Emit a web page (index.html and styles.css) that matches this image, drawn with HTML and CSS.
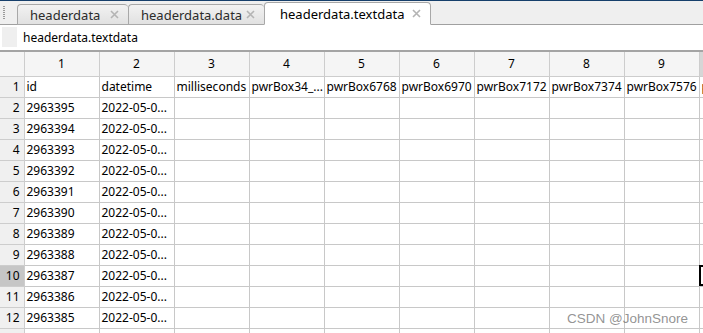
FILE: index.html
```html
<!DOCTYPE html>
<html lang="en">
<head>
    <meta charset="UTF-8">
    <title>headerdata.textdata</title>
    <link rel="stylesheet" href="styles.css">
</head>
<body>
    <div class="window">
        <div class="tabbar">
            <div class="grip"></div>
            <div class="tab">
                <span class="tab-name">headerdata</span>
                <svg class="close" width="9" height="9" viewBox="0 0 9 9"><path d="M1 1L8 8M8 1L1 8" /></svg>
            </div>
            <div class="tab">
                <span class="tab-name">headerdata.data</span>
                <svg class="close" width="9" height="9" viewBox="0 0 9 9"><path d="M1 1L8 8M8 1L1 8" /></svg>
            </div>
            <div class="tab active">
                <span class="tab-name">headerdata.textdata</span>
                <svg class="close" width="9" height="9" viewBox="0 0 9 9"><path d="M1 1L8 8M8 1L1 8" /></svg>
            </div>
        </div>

        <div class="address">
            <div class="corner-box"></div>
            <span>headerdata.textdata</span>
        </div>

        <div class="grid-wrap">
            <table class="sheet" id="sheet">
                <thead>
                    <tr>
                        <th class="rowhead"></th>
                        <th>1</th><th>2</th><th>3</th><th>4</th><th>5</th>
                        <th>6</th><th>7</th><th>8</th><th>9</th><th class="sel-col"></th>
                    </tr>
                </thead>
                <tbody></tbody>
            </table>
        </div>

        <div class="watermark">CSDN @JohnSnore</div>
    </div>

    <script>
        // header line of the text file, then ids counting down
        const names = ['id', 'datetime', 'milliseconds', 'pwrBox34_...', 'pwrBox6768',
            'pwrBox6970', 'pwrBox7172', 'pwrBox7374', 'pwrBox7576', 'pwrBox7778'];
        const body = document.querySelector('#sheet tbody');

        for (let r = 1; r <= 12; r++) {
            const tr = document.createElement('tr');
            const th = document.createElement('th');
            th.className = 'rowhead' + (r === 10 ? ' sel-row' : '');
            th.textContent = r;
            tr.appendChild(th);

            for (let c = 0; c < 10; c++) {
                const td = document.createElement('td');
                if (r === 1) {
                    td.textContent = names[c];
                } else if (c === 0) {
                    td.textContent = 2963395 - (r - 2);
                } else if (c === 1) {
                    td.textContent = '2022-05-0...';
                }
                if (r === 10 && c === 9) td.className = 'current';
                tr.appendChild(td);
            }
            body.appendChild(tr);
        }

        // last row only peeks in at the bottom edge
        const tail = document.createElement('tr');
        tail.className = 'tail';
        for (let c = 0; c < 11; c++) {
            tail.appendChild(document.createElement(c === 0 ? 'th' : 'td'));
        }
        tail.firstChild.className = 'rowhead';
        body.appendChild(tail);
    </script>
</body>
</html>
```

FILE: styles.css
```css
body {
    margin: 0;
    overflow: hidden;
    font-family: "Noto Sans", "Microsoft YaHei", sans-serif;
    font-size: 12px;
    color: #000;
    background: #fff;
}

.window {
    position: relative;
    width: 703px;
    height: 333px;
    overflow: hidden;
    border-top: 1px solid #163f6b;
    box-sizing: border-box;
}

.tabbar {
    display: flex;
    align-items: flex-end;
    height: 24px;
    box-sizing: border-box;
    background-color: #efefef;
    border-bottom: 1px solid #a0a0a0;
}

.grip {
    align-self: center;
    width: 2px;
    height: 14px;
    margin: 0 12px 0 3px;
    background-image: repeating-linear-gradient(to bottom, #9a9a9a 0, #9a9a9a 1px, transparent 1px, transparent 2px);
}

.tab {
    display: flex;
    align-items: center;
    justify-content: space-between;
    height: 21px;
    box-sizing: border-box;
    padding: 0 9px 0 12px;
    margin-bottom: -1px;
    border: 1px solid #a8a8a8;
    border-right: none;
    border-radius: 4px 4px 0 0;
    background-image: linear-gradient(to bottom, #f2f2f2, #e1e1e1);
    font-size: 13px;
    color: #2b2b2b;
}

.tab:nth-child(2) { width: 111px; }
.tab:nth-child(3) { width: 136px; }

.tab.active {
    width: 167px;
    height: 23px;
    padding-left: 15px;
    border-right: 1px solid #a8a8a8;
    border-bottom-color: #fff;
    background: #fff;
    color: #000;
}

.close {
    fill: none;
    stroke: #b4b4b4;
    stroke-width: 1.6;
}

.address {
    display: flex;
    align-items: center;
    height: 27px;
    box-sizing: border-box;
    padding: 0 2px 1px;
    border-bottom: 2px solid #a4a4a4;
    font-size: 12px;
}

.corner-box {
    width: 15px;
    height: 20px;
    margin-right: 6px;
    background-color: #efefef;
}

.grid-wrap {
    width: 1000px;
}

.sheet {
    border-collapse: collapse;
    table-layout: fixed;
}

.sheet th,
.sheet td {
    width: 75px;
    height: 21px;
    padding: 0 0 0 2px;
    box-sizing: border-box;
    border: 1px solid #c8c8c8;
    border-top: none;
    border-left: none;
    white-space: nowrap;
    overflow: hidden;
    text-align: left;
    font-weight: normal;
}

.sheet thead th {
    height: 24px;
    padding: 0;
    text-align: center;
    background-color: #f5f5f5;
    border-color: #cdcdcd;
}

.sheet .rowhead {
    width: 24px;
    padding: 0 4px 0 0;
    text-align: right;
    background-color: #f0f0f0;
    border-color: #cdcdcd;
}

.sheet thead .rowhead {
    background-color: #f5f5f5;
}

.sheet .sel-row {
    background-color: #c6c6c6;
}

.sheet thead .sel-col {
    background-color: #d6d6d6;
}

.sheet td.current {
    outline: 2px solid #000;
    outline-offset: -2px;
}

.watermark {
    position: absolute;
    right: 15px;
    bottom: 7px;
    font-family: "Liberation Sans", Arial, sans-serif;
    font-size: 13.5px;
    color: rgba(120, 120, 120, 0.8);
}
```
